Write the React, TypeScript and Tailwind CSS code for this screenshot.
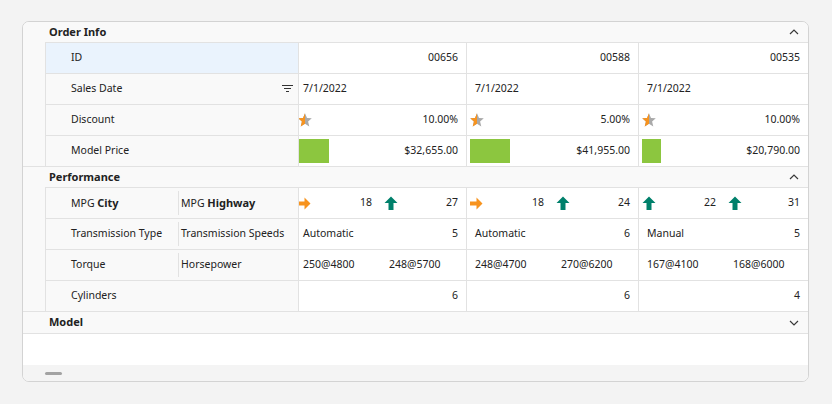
import React from "react";

type Dir = "right" | "up";

type Col = {
  id: string;
  date: string;
  discount: string;
  bar: number;
  price: string;
  city: [Dir, number];
  highway: [Dir, number];
  trans: [string, string];
  torque: [string, string];
  cyl: string;
};

const cols: Col[] = [
  {
    id: "00656",
    date: "7/1/2022",
    discount: "10.00%",
    bar: 31,
    price: "$32,655.00",
    city: ["right", 18],
    highway: ["up", 27],
    trans: ["Automatic", "5"],
    torque: ["250@4800", "248@5700"],
    cyl: "6",
  },
  {
    id: "00588",
    date: "7/1/2022",
    discount: "5.00%",
    bar: 40,
    price: "$41,955.00",
    city: ["right", 18],
    highway: ["up", 24],
    trans: ["Automatic", "6"],
    torque: ["248@4700", "270@6200"],
    cyl: "6",
  },
  {
    id: "00535",
    date: "7/1/2022",
    discount: "10.00%",
    bar: 19,
    price: "$20,790.00",
    city: ["up", 22],
    highway: ["up", 31],
    trans: ["Manual", "5"],
    torque: ["167@4100", "168@6000"],
    cyl: "4",
  },
];

const colWidths = ["w-[168px]", "w-[172px]", "flex-1"];

function Chevron({ up }: { up?: boolean }) {
  return (
    <svg width="10" height="6" viewBox="0 0 10 6" className="shrink-0">
      <path
        d={up ? "M1 5 L5 1 L9 5" : "M1 1 L5 5 L9 1"}
        fill="none"
        stroke="#3a3a3a"
        strokeWidth="1.2"
      />
    </svg>
  );
}

function FilterIcon() {
  return (
    <svg width="12" height="8" viewBox="0 0 12 8" className="shrink-0">
      <rect x="0" y="0" width="11" height="1" fill="#333" />
      <rect x="2" y="3" width="7" height="1" fill="#333" />
      <rect x="4" y="6" width="3" height="1" fill="#333" />
    </svg>
  );
}

function Star() {
  const pts = "7,0.3 9,5 13.8,5.3 10.1,8.5 11.3,13.4 7,10.7 2.7,13.4 3.9,8.5 0.2,5.3 5,5";
  return (
    <svg width="14" height="14" viewBox="0 0 14 14" className="shrink-0">
      <defs>
        <clipPath id="star-left-half">
          <rect x="0" y="0" width="7" height="14" />
        </clipPath>
      </defs>
      <polygon points={pts} fill="#a9a9a9" />
      <polygon points={pts} fill="#f7931e" clipPath="url(#star-left-half)" />
    </svg>
  );
}

function Arrow({ dir }: { dir: Dir }) {
  if (dir === "right") {
    return (
      <svg width="13" height="13" viewBox="0 0 13 13" className="shrink-0">
        <polygon points="0,4.5 6.5,4.5 6.5,0.5 12.5,6.5 6.5,12.5 6.5,8.5 0,8.5" fill="#f7931e" />
      </svg>
    );
  }
  return (
    <svg width="14" height="14" viewBox="0 0 14 14" className="shrink-0">
      <polygon points="7,0.5 13.5,7 9.5,7 9.5,14 4.5,14 4.5,7 0.5,7" fill="#00806b" />
    </svg>
  );
}

function Sep() {
  return <div className="w-px my-[3px] bg-[#e2e2e2] shrink-0" />;
}

function DataCell({ i, children, last }: { i: number; children: React.ReactNode; last?: boolean }) {
  return (
    <div className={`${colWidths[i]} h-full overflow-hidden ${last ? "" : "border-r border-[#e2e2e2]"}`}>
      <div className={i === 0 ? "flex h-full items-center -ml-1" : "flex h-full items-center"}>{children}</div>
    </div>
  );
}

function Row({
  header,
  focused,
  last,
  render,
}: {
  header: React.ReactNode;
  focused?: boolean;
  last?: boolean;
  render: (c: Col, i: number) => React.ReactNode;
}) {
  return (
    <div className={`flex ${last ? "h-[30px]" : "h-[31px] border-b border-[#e2e2e2]"}`}>
      <div
        className={`w-[254px] shrink-0 h-full border-l border-r border-[#e2e2e2] ${
          focused ? "bg-[#eaf3fd]" : "bg-[#f9f9f9]"
        }`}
      >
        {header}
      </div>
      <div className="flex flex-1 h-full bg-white">
        {cols.map((c, i) => (
          <DataCell key={i} i={i} last={i === cols.length - 1}>
            {render(c, i)}
          </DataCell>
        ))}
      </div>
    </div>
  );
}

function Head({ text, extra }: { text: React.ReactNode; extra?: React.ReactNode }) {
  return (
    <div className="flex h-full items-center pl-[25px] pr-[4px]">
      <span className="flex-1">{text}</span>
      {extra}
    </div>
  );
}

function SplitHead({ a, b }: { a: React.ReactNode; b: React.ReactNode }) {
  return (
    <div className="flex h-full">
      <div className="w-[132px] shrink-0 flex items-center pl-[25px]">{a}</div>
      <Sep />
      <div className="flex-1 flex items-center pl-[2px]">{b}</div>
    </div>
  );
}

function Split({ a, b }: { a: React.ReactNode; b: React.ReactNode }) {
  return (
    <>
      <div className="w-[85px] shrink-0 h-full flex items-center">{a}</div>
      <Sep />
      <div className="flex-1 h-full flex items-center">{b}</div>
    </>
  );
}

function Category({ title, open }: { title: string; open?: boolean }) {
  return (
    <div className={`flex h-[21px] items-center pl-[4px] pr-[9px] ${open ? "border-b border-[#e2e2e2]" : ""}`}>
      <span className="flex-1 font-bold text-[11px]">{title}</span>
      <Chevron up={open} />
    </div>
  );
}

function Group({ title, open, children }: { title: string; open?: boolean; children?: React.ReactNode }) {
  return (
    <div className="flex border-b border-[#e2e2e2] bg-[#f9f9f9]">
      <div className="w-[22px] shrink-0" />
      <div className="flex-1 flex flex-col">
        <Category title={title} open={open} />
        {children}
      </div>
    </div>
  );
}

const right = "flex-1 text-right pr-2";
const left = "pl-2";

export default function App() {
  return (
    <div
      className="w-[832px] h-[404px] bg-[#f3f3f3] pt-[21px] pl-[22px] text-[10.5px] text-[#222]"
      style={{ fontFamily: '"Noto Sans", "Open Sans", sans-serif' }}
    >
      <div className="w-[787px] h-[361px] flex flex-col bg-white border border-[#d3d3d3] rounded-[7px] overflow-hidden">
        <Group title="Order Info" open>
          <Row focused header={<Head text="ID" />} render={(c) => <span className={right}>{c.id}</span>} />
          <Row
            header={<Head text="Sales Date" extra={<FilterIcon />} />}
            render={(c) => <span className={left}>{c.date}</span>}
          />
          <Row
            header={<Head text="Discount" />}
            render={(c) => (
              <>
                <span className="pl-[3px] flex">
                  <Star />
                </span>
                <span className={right}>{c.discount}</span>
              </>
            )}
          />
          <Row
            last
            header={<Head text="Model Price" />}
            render={(c) => (
              <>
                <div className="pl-[3px] shrink-0">
                  <div className="h-6 bg-[#8cc63f]" style={{ width: c.bar }} />
                </div>
                <span className={right}>{c.price}</span>
              </>
            )}
          />
        </Group>
        <Group title="Performance" open>
          <Row
            header={
              <SplitHead
                a={
                  <span>
                    MPG <b className="text-[11px]">City</b>
                  </span>
                }
                b={
                  <span>
                    MPG <b className="text-[11px]">Highway</b>
                  </span>
                }
              />
            }
            render={(c) => (
              <Split
                a={
                  <>
                    <span className="pl-[3px] flex">
                      <Arrow dir={c.city[0]} />
                    </span>
                    <span className={right}>{c.city[1]}</span>
                  </>
                }
                b={
                  <>
                    <span className="pl-[3px] flex">
                      <Arrow dir={c.highway[0]} />
                    </span>
                    <span className={right}>{c.highway[1]}</span>
                  </>
                }
              />
            )}
          />
          <Row
            header={<SplitHead a="Transmission Type" b="Transmission Speeds" />}
            render={(c) => (
              <Split
                a={<span className={left}>{c.trans[0]}</span>}
                b={<span className={right}>{c.trans[1]}</span>}
              />
            )}
          />
          <Row
            header={<SplitHead a="Torque" b="Horsepower" />}
            render={(c) => (
              <Split
                a={<span className={left}>{c.torque[0]}</span>}
                b={<span className={left}>{c.torque[1]}</span>}
              />
            )}
          />
          <Row last header={<Head text="Cylinders" />} render={(c) => <span className={right}>{c.cyl}</span>} />
        </Group>
        <Group title="Model" />
        <div className="flex-1 bg-white" />
        <div className="h-[16px] bg-[#f4f4f4] flex items-center pl-[22px]">
          <div className="w-[17px] h-[3px] rounded-full bg-[#a3a3a3]" />
        </div>
      </div>
    </div>
  );
}
